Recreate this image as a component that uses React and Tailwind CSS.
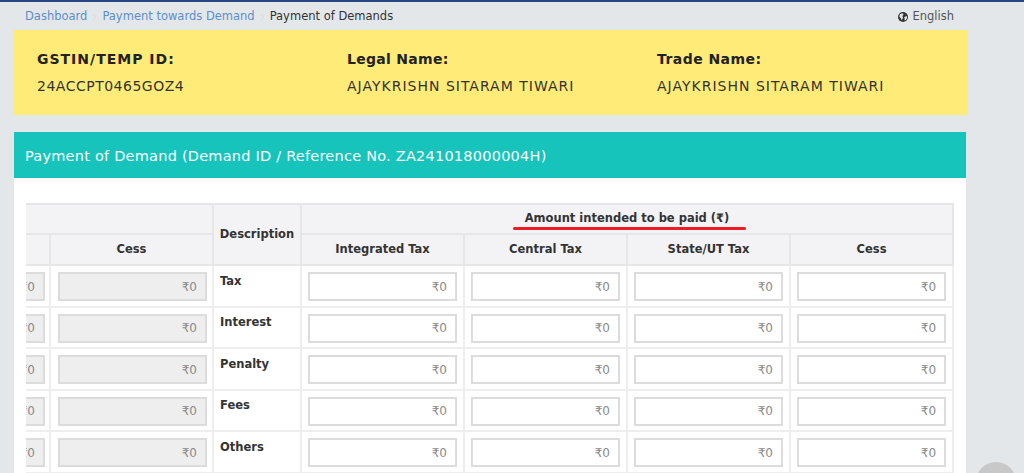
import React from "react";
import { ChevronRight } from "lucide-react";

const font = "font-['DejaVu_Sans','Liberation_Sans',sans-serif]";
const rows = ["Tax", "Interest", "Penalty", "Fees", "Others"];
const heads = ["Integrated Tax", "Central Tax", "State/UT Tax", "Cess"];

const Globe = () => (
  <svg viewBox="0 0 16 16" className="w-[10px] h-[10px] shrink-0">
    <circle cx="8" cy="8" r="8" fill="#333333" />
    <path d="M3 3.5 L7 2 L9 4 L7 6.5 L8 9 L6 13 L4.5 10 L2 7 Z M10 8 L14.5 6.5 L14 11 L11 14 Z" fill="#e4e7ea" />
  </svg>
);

const Amount = ({ disabled }) => (
  <input
    readOnly
    value="₹0"
    className={`block w-full h-[29px] border-2 border-[#dcdcdc] px-[8px] text-right text-[12px] text-[#8a8a8a] outline-none ${disabled ? "bg-[#eeeeee]" : "bg-white"}`}
  />
);

const Crumb = ({ children }) => (
  <>
    <span className="text-[#5b8fcb]">{children}</span>
    <ChevronRight size={9} className="text-[#cfd3d8] mx-[3px]" />
  </>
);

const Info = ({ title, value, titleClass, valueClass }) => (
  <div className="w-[310px]">
    <div className={`text-[14px] font-bold text-[#222222] leading-[20px] ${titleClass}`}>{title}</div>
    <div className={`mt-[7px] text-[14px] text-[#333333] leading-[20px] ${valueClass}`}>{value}</div>
  </div>
);

export default function App() {
  return (
    <div className={`${font} relative h-[473px] overflow-hidden bg-[#e4e7ea] border-t-2 border-[#27467e]`}>
      <div className="flex items-center justify-between h-[28px] pt-[2px] pl-[25px] pr-[70px] text-[11.5px]">
        <div className="flex items-center">
          <Crumb>Dashboard</Crumb>
          <Crumb>Payment towards Demand</Crumb>
          <span className="text-[#333333]">Payment of Demands</span>
        </div>
        <div className="flex items-center gap-[4px] text-[#555555]">
          <Globe />
          English
        </div>
      </div>

      <div className="flex ml-[13px] w-[954px] h-[85px] bg-[#ffec78] pl-[24px] pt-[19px]">
        <Info
          title="GSTIN/TEMP ID:"
          value="24ACCPT0465GOZ4"
          titleClass="tracking-[1px]"
          valueClass="tracking-[0.5px]"
        />
        <Info
          title="Legal Name:"
          value="AJAYKRISHN SITARAM TIWARI"
          titleClass="tracking-[0.3px]"
          valueClass="tracking-[1px]"
        />
        <Info
          title="Trade Name:"
          value="AJAYKRISHN SITARAM TIWARI"
          titleClass="tracking-[0.45px]"
          valueClass="tracking-[1px]"
        />
      </div>

      <div className="ml-[14px] mt-[17px] w-[952px] h-[400px] bg-white">
        <div className="flex items-center h-[46px] pt-[3px] pl-[11px] pr-[12px] bg-[#17c4bb] text-[14.5px] tracking-[0.23px] text-white">
          Payment of Demand (Demand ID / Reference No. ZA241018000004H)
        </div>
        <div className="ml-[12px] mt-[25px] w-[927px]">
          <table className="table-fixed w-[927px] border-collapse text-[11.5px] text-[#333333]">
            <colgroup>
              <col className="w-[24px]" />
              <col className="w-[163px]" />
              <col className="w-[88px]" />
              <col className="w-[163px]" />
              <col className="w-[163px]" />
              <col className="w-[163px]" />
              <col className="w-[163px]" />
            </colgroup>
            <thead className="bg-[#f3f3f5]">
              <tr className="h-[30px] border-t-2 border-[#e6e6e6]">
                <th colSpan={2} className="border-r-2 border-b-2 border-[#e6e6e6]" />
                <th rowSpan={2} className="border-x-2 border-b-2 border-[#e6e6e6] font-bold">Description</th>
                <th colSpan={4} className="relative border-x-2 border-b-2 border-[#e6e6e6] font-bold">
                  Amount intended to be paid (₹)
                  <span className="absolute left-[211px] top-[22px] w-[233px] h-[3px] rounded-full bg-[#ee1c25]" />
                </th>
              </tr>
              <tr className="h-[31px]">
                <th className="border-r-2 border-b-2 border-[#e6e6e6]" />
                <th className="border-x-2 border-b-2 border-[#e6e6e6] font-bold">Cess</th>
                {heads.map((h) => (
                  <th key={h} className="border-x-2 border-b-2 border-[#e6e6e6] font-bold">{h}</th>
                ))}
              </tr>
            </thead>
            <tbody>
              {rows.map((r) => (
                <tr key={r} className="h-[41.6px] border-b-2 border-[#eeeeee]">
                  <td className="border-r-2 border-[#eeeeee] pr-[4px] align-top pt-[6px] overflow-hidden">
                    <div className="flex justify-end">
                      <div className="w-[60px] shrink-0">
                        <Amount disabled />
                      </div>
                    </div>
                  </td>
                  <td className="border-x-2 border-[#eeeeee] pl-[7px] pr-[5px] align-top pt-[6px]">
                    <Amount disabled />
                  </td>
                  <td className="border-x-2 border-[#eeeeee] px-[6px] align-top pt-[6.5px] font-bold">{r}</td>
                  {heads.map((h) => (
                    <td key={h} className="border-x-2 border-[#eeeeee] px-[6px] align-top pt-[6px]">
                      <Amount />
                    </td>
                  ))}
                </tr>
              ))}
            </tbody>
          </table>
        </div>
      </div>

      <div className="absolute left-[976px] top-[460px] w-[40px] h-[40px] rounded-full bg-[#c8c8c8]" />
    </div>
  );
}
